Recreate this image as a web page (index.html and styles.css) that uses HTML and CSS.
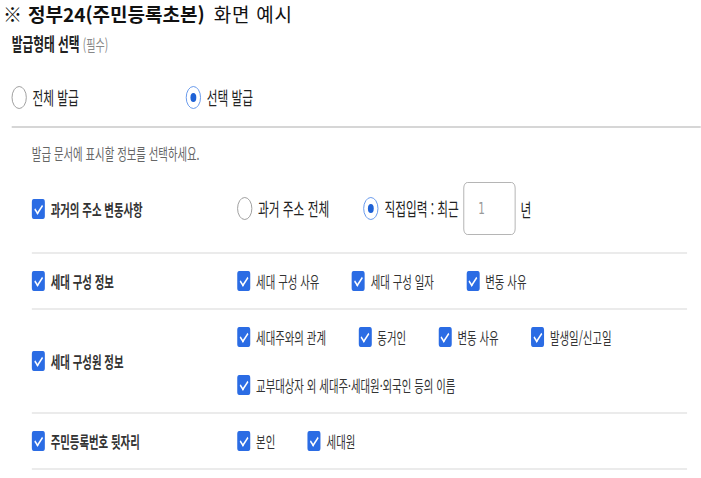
FILE: index.html
```html
<!DOCTYPE html>
<html lang="ko">
<head>
    <meta charset="UTF-8">
    <meta name="viewport" content="width=device-width, initial-scale=1.0">
    <title>정부24 주민등록초본 화면 예시</title>
    <link rel="stylesheet" href="styles.css">
</head>
<body>
    <h1 class="caption"><span class="mark">※</span><strong>정부24(주민등록초본)</strong><span class="sub">화면 예시</span></h1>
    <div class="viewport">
        <div class="form">
            <h2 class="form-title">발급형태 선택 <span class="required">(필수)</span></h2>
            <div class="issue-type">
                <label class="radio"><span class="radio-mark"></span>전체 발급</label>
                <label class="radio"><span class="radio-mark checked"></span>선택 발급</label>
            </div>
            <div class="detail">
                <p class="guide">발급 문서에 표시할 정보를 선택하세요.</p>

                <div class="row">
                    <label class="check row-label"><span class="check-mark"></span>과거의 주소 변동사항</label>
                    <div class="options">
                        <label class="radio"><span class="radio-mark"></span>과거 주소 전체</label>
                        <div class="recent">
                            <label class="radio"><span class="radio-mark checked"></span>직접입력 : 최근</label>
                            <input class="year-input" type="text" value="1">
                            <span class="unit">년</span>
                        </div>
                    </div>
                </div>

                <div class="row">
                    <label class="check row-label"><span class="check-mark"></span>세대 구성 정보</label>
                    <div class="options">
                        <label class="check"><span class="check-mark"></span>세대 구성 사유</label>
                        <label class="check"><span class="check-mark"></span>세대 구성 일자</label>
                        <label class="check"><span class="check-mark"></span>변동 사유</label>
                    </div>
                </div>

                <div class="row">
                    <label class="check row-label"><span class="check-mark"></span>세대 구성원 정보</label>
                    <div class="options">
                        <label class="check"><span class="check-mark"></span>세대주와의 관계</label>
                        <label class="check"><span class="check-mark"></span>동거인</label>
                        <label class="check"><span class="check-mark"></span>변동 사유</label>
                        <label class="check"><span class="check-mark"></span>발생일/신고일</label>
                        <label class="check"><span class="check-mark"></span>교부대상자 외 세대주·세대원·외국인 등의 이름</label>
                    </div>
                </div>

                <div class="row">
                    <label class="check row-label"><span class="check-mark"></span>주민등록번호 뒷자리</label>
                    <div class="options">
                        <label class="check"><span class="check-mark"></span>본인</label>
                        <label class="check"><span class="check-mark"></span>세대원</label>
                    </div>
                </div>
            </div>
        </div>
    </div>
</body>
</html>
```

FILE: styles.css
```css
body {
    margin: 0;
    font-family: "Noto Sans CJK KR", "Noto Sans", sans-serif;
    color: #222;
    background-color: white;
    overflow: hidden;
}
.caption {
    margin: 0 0 0 3px;
    padding-top: 3px;
    font-size: 19px;
    line-height: 22px;
    font-weight: normal;
    color: #111;
}
.caption .mark {
    margin-right: 6px;
}
.caption .sub {
    margin-left: 9px;
    letter-spacing: 0.8px;
}

/* the capture is squeezed sideways, so the form is laid out wide and scaled */
.viewport {
    width: 701px;
    overflow: hidden;
}
.form {
    width: 1078px;
    box-sizing: border-box;
    padding: 6px 0 0 18px;
    transform: scaleX(0.65);
    transform-origin: 0 0;
}
.form-title {
    margin: 0;
    font-size: 18px;
    line-height: 24px;
    font-weight: bold;
    color: #222;
}
.required {
    font-size: 15.5px;
    font-weight: normal;
    color: #888;
}
.issue-type {
    display: flex;
    margin-top: 30px;
    padding-bottom: 17px;
    border-bottom: 2px solid #d6d6d6;
}
.issue-type .radio {
    width: 268px;
}

.radio {
    display: flex;
    align-items: center;
    gap: 9px;
    font-size: 18px;
    line-height: 23px;
    color: #222;
}
.radio-mark {
    width: 23px;
    height: 23px;
    box-sizing: border-box;
    border: 1.5px solid #8c8c8c;
    border-radius: 50%;
    flex: none;
    display: flex;
    align-items: center;
    justify-content: center;
}
.radio-mark.checked {
    border-color: #4a86e8;
}
.radio-mark.checked::after {
    content: "";
    width: 9px;
    height: 9px;
    border-radius: 50%;
    background-color: #1f62d6;
}

.detail {
    padding: 14px 21px 0 31px;
}
.guide {
    margin: 0 0 1px;
    font-size: 16px;
    line-height: 22px;
    color: #666;
}
.row {
    display: flex;
    align-items: center;
    padding: 17px 0;
    border-bottom: 2px solid #ebebeb;
}
.row-label {
    width: 316px;
    flex: none;
    font-weight: bold;
    color: #111;
}
.check {
    display: flex;
    align-items: center;
    gap: 9px;
    font-size: 16px;
    line-height: 20px;
    color: #333;
}
.check-mark {
    width: 20px;
    height: 20px;
    border-radius: 3px;
    background-color: #2b6ce4;
    flex: none;
    display: flex;
    justify-content: center;
}
.check-mark::after {
    content: "";
    width: 5px;
    height: 10px;
    margin-top: 3px;
    border: solid white;
    border-width: 0 2px 2px 0;
    transform: rotate(45deg);
}
.options {
    flex: 1;
    display: flex;
    flex-wrap: wrap;
    align-items: center;
    column-gap: 50px;
    row-gap: 28px;
}
.recent {
    display: flex;
    align-items: center;
    gap: 7px;
    margin-left: 3px;
}
.year-input {
    width: 80px;
    height: 53px;
    box-sizing: border-box;
    margin: 0;
    padding: 0 0 0 22px;
    border: 1px solid #a5a5a5;
    border-radius: 6px;
    font-family: "DejaVu Sans", sans-serif;
    font-size: 16px;
    color: #999;
    background-color: white;
}
.unit {
    margin-left: 1px;
    font-size: 18px;
    color: #222;
}
```
